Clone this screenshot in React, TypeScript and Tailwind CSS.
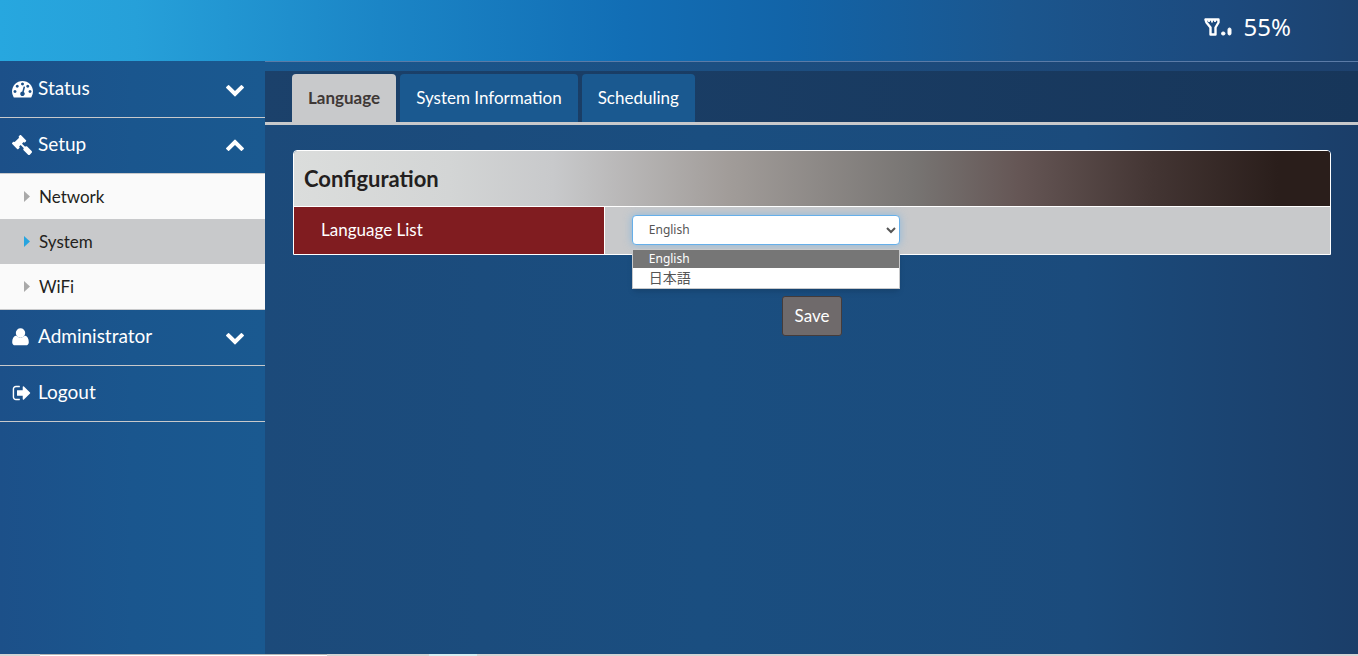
import React, { useState } from 'react';
import { FaGavel } from 'react-icons/fa';

interface IconProps {
  path: string;
  className?: string;
}

interface MenuRowProps {
  label: string;
  icon: React.ReactNode;
  chevron?: 'up' | 'down';
}

const ICONS = {
  dashboard:
    'M384 1152q0-53-37.5-90.5t-90.5-37.5-90.5 37.5-37.5 90.5 37.5 90.5 90.5 37.5 90.5-37.5 37.5-90.5zm192-448q0-53-37.5-90.5t-90.5-37.5-90.5 37.5-37.5 90.5 37.5 90.5 90.5 37.5 90.5-37.5 37.5-90.5zm428 481l101-382q6-26-7.5-48.5t-38.5-29.5-48 6.5-30 39.5l-101 382q-60 5-107 43.5t-63 98.5q-20 77 20 146t117 89 146-20 89-117q16-60-6-117t-72-91zm660-33q0-53-37.5-90.5t-90.5-37.5-90.5 37.5-37.5 90.5 37.5 90.5 90.5 37.5 90.5-37.5 37.5-90.5zm-640-640q0-53-37.5-90.5t-90.5-37.5-90.5 37.5-37.5 90.5 37.5 90.5 90.5 37.5 90.5-37.5 37.5-90.5zm448 192q0-53-37.5-90.5t-90.5-37.5-90.5 37.5-37.5 90.5 37.5 90.5 90.5 37.5 90.5-37.5 37.5-90.5zm320 448q0 261-141 483-19 29-54 29h-1402q-35 0-54-29-141-221-141-483 0-182 71-348t191-286 286-191 348-71 348 71 286 191 191 286 71 348z',
  signOut:
    'M704 1440q0 4 1 20t.5 26.5-3 23.5-10 19.5-20.5 6.5h-320q-119 0-203.5-84.5t-84.5-203.5v-704q0-119 84.5-203.5t203.5-84.5h320q13 0 22.5 9.5t9.5 22.5q0 4 1 20t.5 26.5-3 23.5-10 19.5-20.5 6.5h-320q-66 0-113 47t-47 113v704q0 66 47 113t113 47h312l11.5 1 11.5 3 8 5.5 7 9 2 13.5zm928-544q0 26-19 45l-544 544q-19 19-45 19t-45-19-19-45v-288h-448q-26 0-45-19t-19-45v-384q0-26 19-45t45-19h448v-288q0-26 19-45t45-19 45 19l544 544q19 19 19 45z',
  chevronDown:
    'M1683 808l-742 741q-19 19-45 19t-45-19l-742-741q-19-19-19-45.5t19-45.5l166-165q19-19 45-19t45 19l531 531 531-531q19-19 45-19t45 19l166 165q19 19 19 45.5t-19 45.5z',
};

const Icon = ({ path, className = '' }: IconProps) => (
  <svg viewBox="0 0 1792 1792" fill="currentColor" className={className} aria-hidden="true">
    <path d={path} />
  </svg>
);

const UserIcon = () => (
  <svg viewBox="0 0 17 18" className="h-[18px] w-[17px]" fill="currentColor" aria-hidden="true">
    <circle cx="8.500" cy="5" r="4.700" />
    <path d="M4.300 7.500C1.500 8 .2 10.500.2 14.200c0 1.900 1.200 3.100 3 3.100h10.600c1.800 0 3-1.200 3-3.100 0-3.700-1.300-6.200-4.100-6.700-1.100 1.400-2.500 2.100-4.200 2.100S5.400 8.900 4.300 7.500z" />
  </svg>
);

const SignalIcon = () => (
  <svg viewBox="0 0 28 20" className="h-5 w-7" fill="none" stroke="white" aria-hidden="true">
    <path d="M1.500 2.500h13v3l-3 5v7h-5v-7l-4-5z" strokeWidth="2.400" strokeLinejoin="round" />
    <path d="M5 3v2M8 3v2.500M11 3v2" strokeWidth="1.800" />
    <rect x="17.500" y="15" width="3.500" height="3" rx="1.500" fill="white" />
    <rect x="24" y="11" width="3" height="7" rx="1.500" fill="white" />
  </svg>
);

const MenuRow = ({ label, icon, chevron }: MenuRowProps) => (
  <button
    className="flex h-14 w-full items-center border-b border-[#c8c9cb] pr-5 pb-0.5 pl-3 text-left text-[19px] text-white"
    aria-expanded={chevron ? chevron === 'up' : undefined}
  >
    <span className="flex w-[26px] items-center">{icon}</span>
    <span className="grow">{label}</span>
    {chevron && (
      <Icon path={ICONS.chevronDown} className={chevron === 'up' ? 'mt-1 size-5 rotate-180' : 'size-5'} />
    )}
  </button>
);

const SUB_ITEMS = ['Network', 'System', 'WiFi'];
const TABS = ['Language', 'System Information', 'Scheduling'];
const LANGUAGES = ['English', '日本語'];

const Sidebar = () => {
  const [current, setCurrent] = useState('System');

  return (
    <nav className="w-[265px] shrink-0 bg-linear-to-r from-[#1c5089] via-[#1a568e] to-[#1a5990] pt-px">
      <MenuRow label="Status" icon={<Icon path={ICONS.dashboard} className="size-[21px]" />} chevron="down" />
      <MenuRow label="Setup" icon={<FaGavel className="size-5 -scale-x-100" />} chevron="up" />
      <ul className="border-b border-[#c8c9cb]">
        {SUB_ITEMS.map((item) => (
          <li key={item}>
            <a
              href={`#${item.toLowerCase()}`}
              onClick={() => setCurrent(item)}
              className={`flex h-[45px] items-center gap-[9px] pl-6 text-[17px] text-[#231f20] ${
                item === current ? 'bg-[#c8c9cb]' : 'bg-[#fafafa]'
              }`}
            >
              <svg
                viewBox="0 0 6 11"
                className={`h-[11px] w-1.5 ${item === current ? 'fill-[#27a4df]' : 'fill-[#a9a9a9]'}`}
                aria-hidden="true"
              >
                <path d="M0 0l6 5.500-6 5.500z" />
              </svg>
              {item}
            </a>
          </li>
        ))}
      </ul>
      <MenuRow label="Administrator" icon={<UserIcon />} chevron="down" />
      <MenuRow label="Logout" icon={<Icon path={ICONS.signOut} className="size-5" />} />
    </nav>
  );
};

const LanguageForm = () => {
  const [language, setLanguage] = useState('English');

  return (
    <form className="flex flex-col pt-[25px] pr-[27px] pl-7" onSubmit={(e) => e.preventDefault()}>
      <section className="rounded-t border border-white">
        <h2 className="flex h-14 items-center rounded-t-[3px] border-b border-white bg-[linear-gradient(90deg,#dbdddc_0%,#d3d5d5_15%,#c8c9cb_25%,#a19c99_42%,#777472_60%,#655655_70%,#433533_83%,#2a1e1b_95%)] px-2.5 text-[22px] font-bold text-[#231f20]">
          Configuration
        </h2>
        <div className="flex h-[47px] bg-[#c8c9cb]">
          <label
            htmlFor="language"
            className="flex w-3/10 items-center border-r border-white bg-[#801c20] pb-0.5 pl-[27px] text-[17px] text-white"
          >
            Language List
          </label>
          <div className="flex grow items-center pb-0.5 pl-[27px]">
            <div className="relative w-[268px]">
              <select
                id="language"
                value={language}
                onChange={(e) => setLanguage(e.target.value)}
                className="block h-[30px] w-full rounded border border-[#66afe9] bg-white pl-3 font-['Noto_Sans','Noto_Sans_CJK_JP',sans-serif] text-xs text-[#555] shadow-[0_0_8px_rgba(102,175,233,0.6)] outline-none"
              >
                {LANGUAGES.map((name) => (
                  <option key={name}>{name}</option>
                ))}
              </select>
              <ul
                role="listbox"
                aria-label="Language List"
                className="absolute top-full left-0 mt-1 w-full border border-[#c8c9cb] bg-white font-['Noto_Sans','Noto_Sans_CJK_JP',sans-serif] text-xs shadow-md"
              >
                {LANGUAGES.map((name) => (
                  <li
                    key={name}
                    role="option"
                    aria-selected={name === language}
                    onClick={() => setLanguage(name)}
                    lang={name === 'English' ? 'en' : 'ja'}
                    className={`flex items-center pl-4 ${
                      name === language ? 'h-[18px] bg-[#767676] text-white' : 'h-5 text-sm text-[#555]'
                    }`}
                  >
                    {name}
                  </li>
                ))}
              </ul>
            </div>
          </div>
        </div>
      </section>
      <button
        type="submit"
        className="mt-[41px] h-10 self-center rounded-[3px] border border-[#453c3b] bg-[#6f6a6b] px-3 text-[17px] text-white"
      >
        Save
      </button>
    </form>
  );
};

const App: React.FC = () => {
  const [tab, setTab] = useState('Language');

  return (
    <div className="flex min-h-screen flex-col font-[Lato,'Noto_Sans_CJK_JP',sans-serif]">
      <header className="flex h-[61px] items-center justify-end gap-3 bg-[linear-gradient(90deg,#27a7df_0%,#26a0d9_10%,#1b85c6_28%,#126eb5_46%,#1264a8_58%,#1b568e_75%,#1c4a7e_90%,#1c426f_100%)] px-[67px] pb-2">
        <SignalIcon />
        <span className="font-['Noto_Sans',sans-serif] text-2xl text-white">55%</span>
      </header>

      <div className="flex grow">
        <Sidebar />
        <main className="min-w-0 grow bg-[linear-gradient(90deg,#1c4a7a_0%,#1a4e80_40%,#1b4b7c_75%,#1b3e69_100%)]">
          <div className="h-2.5 border-t border-[#5b7ba7] bg-linear-to-r from-[#1a5990] to-[#1d416e]" />
          <div
            role="tablist"
            className="flex h-[54px] items-end gap-1 border-b-3 border-[#c8c9cb] bg-linear-to-r from-[#1b416b] to-[#17365a] pl-[27px]"
          >
            {TABS.map((name) => (
              <button
                key={name}
                role="tab"
                aria-selected={name === tab}
                onClick={() => setTab(name)}
                className={`h-12 rounded-t px-4 text-[17px] ${
                  name === tab ? 'bg-[#c8c9cb] font-bold text-[#3f3836]' : 'bg-[#1a5990] text-white'
                }`}
              >
                {name}
              </button>
            ))}
          </div>
          <LanguageForm />
        </main>
      </div>

      {/* top edge of the window's status bar */}
      <footer className="flex h-0.5 bg-[#d4d4d4]">
        <div className="ml-10 h-full w-[287px] border-t border-[#b5b5b5] bg-white" />
        <div className="ml-[102px] h-full w-12 bg-[#d5eef2]" />
      </footer>
    </div>
  );
};

export default App;
